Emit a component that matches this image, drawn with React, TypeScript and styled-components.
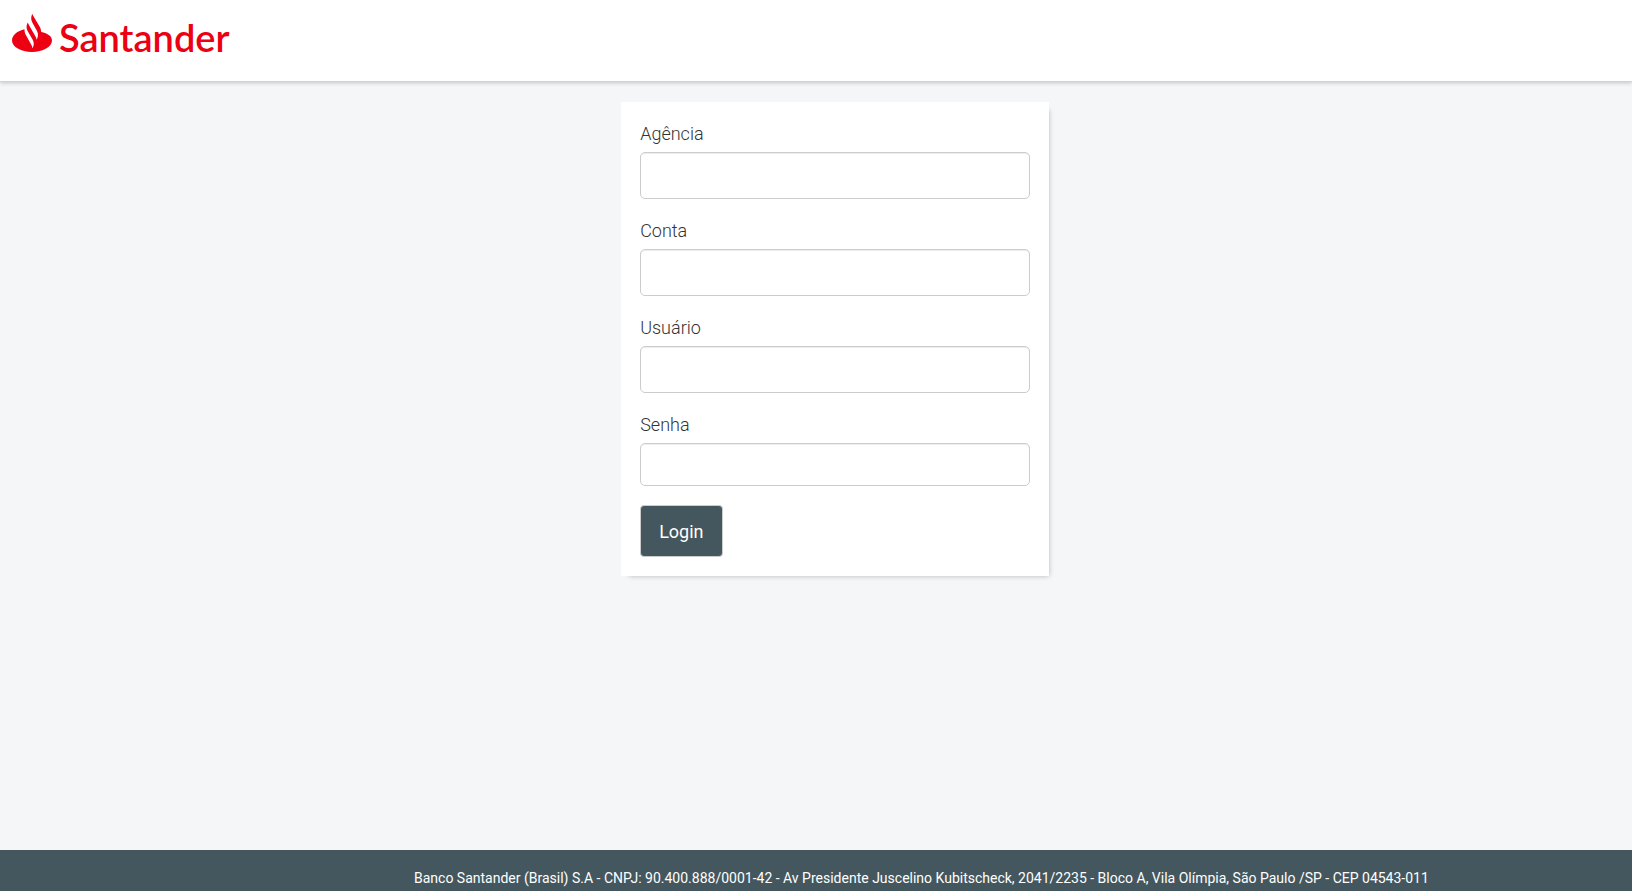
import React from 'react';
import styled, { createGlobalStyle } from 'styled-components';

const GlobalStyle = createGlobalStyle`
  *, *::before, *::after { box-sizing: border-box; }
  body {
    margin: 0;
    background: #f4f6f8;
    color: #333;
    font-family: Roboto, "Liberation Sans", sans-serif;
    font-size: 18px;
  }
`;

const Page = styled.div`
  display: flex;
  flex-direction: column;
  min-height: 100vh;
`;

const Header = styled.header`
  display: flex;
  align-items: flex-start;
  height: 82px;
  padding: 12px;
  background: #fff;
  border-bottom: 1px solid #d1d4d6;
  box-shadow: 0 1px 4px rgba(0, 0, 0, 0.2);
`;

const Brand = styled.a`
  display: flex;
  align-items: flex-start;
  gap: 7px;
  color: #ec0012;
  text-decoration: none;
`;

const Flame = styled.svg`
  display: block;
  width: 40px;
  height: 42px;
`;

const Wordmark = styled.span`
  font-family: Lato, "Open Sans", sans-serif;
  font-size: 38px;
  font-weight: 600;
  line-height: 50px;
`;

const Main = styled.main`
  flex: 1;
  padding: 20px 0 20px calc(38% + 1px);
`;

const Card = styled.form`
  width: 428px;
  max-width: 100%;
  padding: 19px;
  background: #fff;
  box-shadow: 4px 4px 5px -4px rgba(0, 0, 0, 0.25);
`;

const Field = styled.div`
  display: flex;
  flex-direction: column;
  gap: 6px;
  margin-bottom: 19px;
`;

const Label = styled.label`
  font-weight: 300;
  line-height: 25px;
`;

const Input = styled.input<{ $compact?: boolean }>`
  width: 100%;
  height: ${({ $compact }) => ($compact ? 43 : 47)}px;
  padding: 6px 12px;
  border: 1px solid #ccc;
  border-radius: 5px;
  background: #fff;
  box-shadow: inset 0 1px 1px rgba(0, 0, 0, 0.075);
  color: #555;
  font: inherit;
`;

const LoginButton = styled.button`
  display: block;
  height: 52px;
  padding: 0 18px;
  border: 1px solid #ccc;
  border-radius: 4px;
  background: #44575e;
  color: #fff;
  font: inherit;
  cursor: pointer;
`;

const Footer = styled.footer`
  height: 41px;
  padding: 18px 0 0 414px;
  background: #44575e;
  color: #fff;
  font-size: 14px;
  line-height: 20px;
  white-space: nowrap;
`;

const fields = [
  { id: 'agencia', label: 'Agência', type: 'text' },
  { id: 'conta', label: 'Conta', type: 'text' },
  { id: 'usuario', label: 'Usuário', type: 'text' },
  { id: 'senha', label: 'Senha', type: 'password' },
];

export default function App() {
  return (
    <Page>
      <GlobalStyle />
      <Header>
        <Brand href="#">
          <Flame viewBox="0 0 40 42" aria-hidden="true">
            <path
              fill="currentColor"
              d="M29.200 20C29.100 18 28.500 16 27.400 14.300L21.900 5C21.200 3.900 20.700 3 20.500 2L20 2.600C18.900 5 18.900 7.900 20.200 10.300L25 19C26.300 21.500 26.300 24.500 25 27L24.600 27.800C24.500 26.700 24.200 25.600 23.500 24.600L17.200 13.400C16.500 12.300 16 11.400 15.800 10.600L15.400 11.200C14.200 13.700 14.300 16.500 15.600 18.900L20.700 27.700C22.100 30.200 22.100 33 20.900 35.400L20.400 36.200C20.300 35.100 20 34 19.400 33L13.600 22.600C12.800 21 12.400 19 12.500 17.300C5.400 19 0 23 0 28.600C0 35 9 40 20 40S40 35 40 28.600C40 24.200 35.800 21.500 29.200 20Z"
            />
          </Flame>
          <Wordmark>Santander</Wordmark>
        </Brand>
      </Header>
      <Main>
        <Card onSubmit={(event: React.FormEvent) => event.preventDefault()}>
          {fields.map(({ id, label, type }) => (
            <Field key={id}>
              <Label htmlFor={id}>{label}</Label>
              <Input id={id} name={id} type={type} $compact={type === 'password'} />
            </Field>
          ))}
          <LoginButton type="submit">Login</LoginButton>
        </Card>
      </Main>
      <Footer>
        Banco Santander (Brasil) S.A - CNPJ: 90.400.888/0001-42 - Av Presidente Juscelino Kubitscheck, 2041/2235 - Bloco A, Vila Olímpia, São Paulo /SP - CEP 04543-011
      </Footer>
    </Page>
  );
}
